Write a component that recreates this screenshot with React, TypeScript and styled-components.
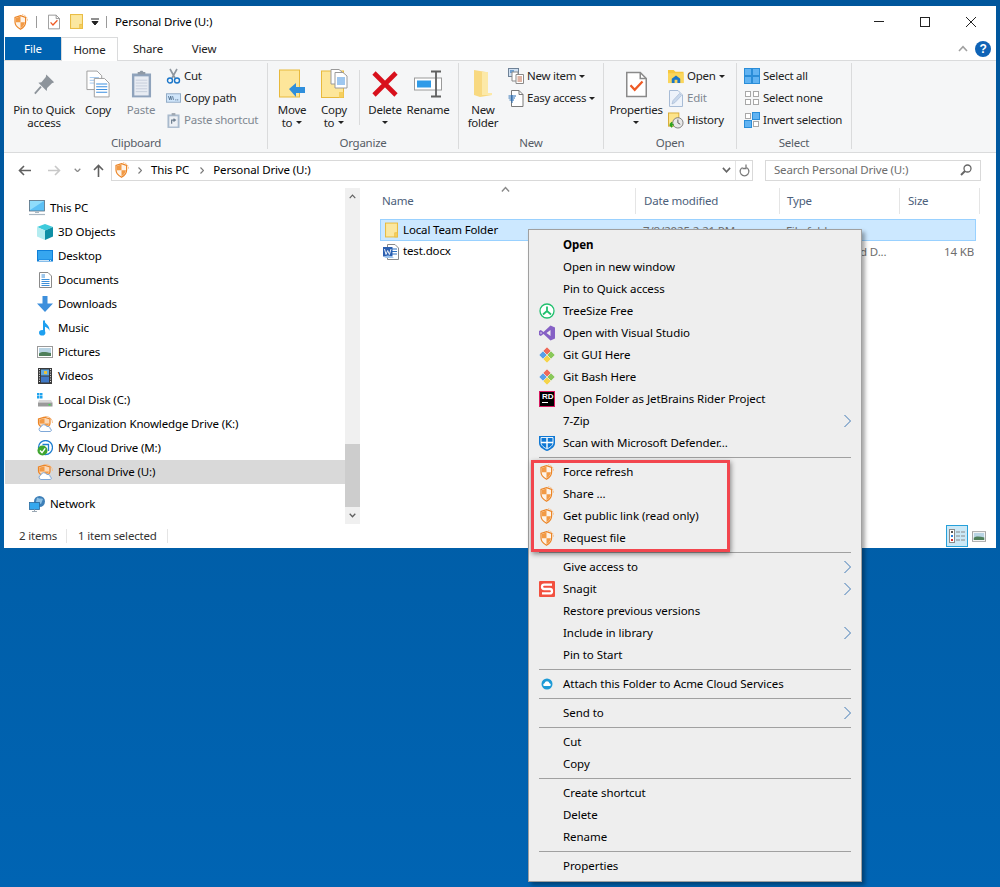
import React from "react";
import styled, { createGlobalStyle } from "styled-components";

const GlobalStyle = createGlobalStyle`
  html, body {
    margin: 0;
    padding: 0;
    background: #005a9e;
  }
  * {
    box-sizing: border-box;
  }
  body {
    font-family: "Noto Sans", "Open Sans", sans-serif;
    font-size: 11.5px;
    letter-spacing: -0.14px;
    color: #000000;
  }
`;

const Page = styled.div`
  position: relative;
  width: 1000px;
  height: 887px;
  overflow: hidden;
  padding: 6px 4px 0;
  background: linear-gradient(180deg, #00569c 0%, #005ea8 60%, #0064b3 100%);
`;
const Window = styled.div`
  width: 992px;
  height: 542px;
  display: flex;
  flex-direction: column;
  background-color: #ffffff;
`;

/* text sits a pixel above the centre of its row, as in the native shell */
const Label = styled.span`
  padding-bottom: 2px;
  white-space: nowrap;
`;

/* title bar */
const TitleBar = styled.div`
  height: 31px;
  display: flex;
  align-items: center;
  padding-left: 10px;
  flex-shrink: 0;
`;
const QuickSlot = styled.div<{ $ml: number }>`
  display: flex;
  align-items: center;
  margin-left: ${(p) => p.$ml}px;
`;
const TitleDivider = styled.div`
  width: 1px;
  height: 12px;
  background-color: #9a9a9a;
`;
const TitleText = styled.div`
  margin-left: 8px;
`;
const WindowControls = styled.div`
  display: flex;
  margin-left: auto;
  padding-right: 2px;
`;
const WindowButton = styled.div`
  width: 46px;
  height: 31px;
  display: flex;
  align-items: center;
  justify-content: center;
`;

/* tabs */
const TabRow = styled.div`
  height: 24px;
  display: flex;
  padding-left: 1px;
  border-bottom: 1px solid #dadbdc;
  flex-shrink: 0;
`;
const Tab = styled.div<{ $w: number; $active?: boolean; $file?: boolean }>`
  width: ${(p) => p.$w}px;
  height: ${(p) => (p.$active ? "24px" : "23px")};
  display: flex;
  align-items: center;
  justify-content: center;
  background-color: ${(p) => (p.$file ? "#0063b1" : "#ffffff")};
  color: ${(p) => (p.$file ? "#ffffff" : "#222222")};
  border: ${(p) => (p.$active ? "1px solid #dadbdc" : "none")};
  border-bottom: none;
`;
const TabRight = styled.div`
  margin-left: auto;
  display: flex;
  align-items: center;
  gap: 7px;
  padding-right: 5px;
`;
const HelpBadge = styled.div`
  width: 16px;
  height: 16px;
  border-radius: 50%;
  background-color: #0f63b6;
  color: #ffffff;
  font-family: "Liberation Sans", sans-serif;
  font-size: 12px;
  font-weight: 700;
  line-height: 16px;
  text-align: center;
`;

/* ribbon */
const Ribbon = styled.div`
  height: 92px;
  display: flex;
  flex-shrink: 0;
  padding: 2px 0 3px 1px;
  background-color: #f5f6f7;
  border-bottom: 1px solid #dadbdc;
  letter-spacing: -0.26px;
`;
const Group = styled.div<{ $w: number }>`
  width: ${(p) => p.$w}px;
  height: 86px;
  display: flex;
  flex-direction: column;
  border-right: 1px solid #dadbdc;
`;
const GroupBody = styled.div<{ $pl: number }>`
  flex: 1;
  display: flex;
  padding-left: ${(p) => p.$pl}px;
`;
const GroupLabel = styled.div`
  height: 12px;
  line-height: 12px;
  text-align: center;
  color: #555c66;
`;
const BigButton = styled.div<{ $w: number; $off?: boolean }>`
  width: ${(p) => p.$w}px;
  display: flex;
  flex-direction: column;
  align-items: center;
  padding-top: 5px;
  white-space: nowrap;
  color: ${(p) => (p.$off ? "#7f8791" : "#222222")};
`;
const BigIcon = styled.div`
  width: 32px;
  height: 32px;
  margin-bottom: 3px;
  display: flex;
  align-items: center;
  justify-content: center;
`;
const BigLine = styled.div`
  height: 13px;
  line-height: 13px;
  display: flex;
  align-items: center;
  gap: 4px;
`;
const Caret = styled.span`
  display: inline-block;
  width: 0;
  height: 0;
  border-left: 3px solid transparent;
  border-right: 3px solid transparent;
  border-top: 3px solid #222222;
`;
const SmallColumn = styled.div<{ $ml: number }>`
  display: flex;
  flex-direction: column;
  margin-left: ${(p) => p.$ml}px;
  padding-top: 2px;
`;
const SmallItem = styled.div<{ $off?: boolean }>`
  height: 22px;
  display: flex;
  align-items: center;
  gap: 3px;
  white-space: nowrap;
  color: ${(p) => (p.$off ? "#7f8791" : "#222222")};
`;
const SmallIcon = styled.div`
  width: 16px;
  height: 16px;
  display: flex;
  align-items: center;
  justify-content: center;
`;
const GroupDivider = styled.div`
  width: 8px;
  height: 55px;
  margin-top: 7px;
  border-right: 1px solid #dadbdc;
`;

/* address bar */
const AddressRow = styled.div`
  height: 33px;
  display: flex;
  align-items: center;
  padding: 1px 0 0 8px;
  flex-shrink: 0;
`;
const NavButton = styled.div<{ $w: number }>`
  width: ${(p) => p.$w}px;
  display: flex;
  justify-content: center;
`;
const UpButton = styled(NavButton)`
  margin: 0 2px 0 5px;
`;
const AddressBox = styled.div`
  width: 642px;
  height: 21px;
  display: flex;
  align-items: center;
  padding-left: 3px;
  border: 1px solid #d9d9d9;
`;
const CrumbArrow = styled.span`
  display: flex;
  margin: 0 9px;
`;
const CrumbGap = styled.span`
  width: 2px;
`;
const AddressEnd = styled.div`
  margin-left: auto;
  display: flex;
  align-items: center;
  height: 100%;
`;
const RefreshCell = styled.div`
  width: 17px;
  height: 100%;
  margin-left: 4px;
  display: flex;
  align-items: center;
  justify-content: center;
  border-left: 1px solid #e3e3e3;
`;
const SearchBox = styled.div`
  width: 216px;
  height: 21px;
  margin-left: 12px;
  display: flex;
  align-items: center;
  justify-content: space-between;
  padding: 0 8px;
  border: 1px solid #d9d9d9;
  color: #6d6d6d;
  letter-spacing: -0.2px;
`;

/* main area */
const Body = styled.div`
  flex: 1;
  display: flex;
  min-height: 0;
`;
const NavPane = styled.div`
  width: 356px;
  display: flex;
  flex-shrink: 0;
`;
const NavList = styled.div`
  width: 340px;
  margin-left: 1px;
  padding-top: 10px;
`;
const NavRow = styled.div<{ $child?: boolean; $selected?: boolean; $gap?: boolean }>`
  height: 24px;
  display: flex;
  align-items: center;
  gap: 5px;
  padding-left: ${(p) => (p.$child ? "32px" : "24px")};
  margin-top: ${(p) => (p.$gap ? "8px" : "0")};
  background-color: ${(p) => (p.$selected ? "#d9d9d9" : "transparent")};
  color: #000000;
  white-space: nowrap;
`;
const NavIcon = styled.div`
  width: 16px;
  height: 16px;
  display: flex;
  align-items: center;
  justify-content: center;
`;
const ScrollBar = styled.div`
  width: 15px;
  height: 336px;
  margin-top: 2px;
  display: flex;
  flex-direction: column;
  align-items: center;
  background-color: #f0f0f0;
`;
const ScrollArrow = styled.div`
  height: 17px;
  display: flex;
  align-items: center;
  justify-content: center;
`;
const ScrollThumb = styled.div`
  width: 15px;
  height: 63px;
  margin-top: auto;
  background-color: #cdcdcd;
`;
const FileArea = styled.div`
  flex: 1;
  padding-left: 20px;
`;
const HeaderRow = styled.div`
  position: relative;
  height: 33px;
  display: grid;
  grid-template-columns: 256px 144px 120px 80px;
  padding-top: 2px;
  letter-spacing: -0.2px;
`;
const HeaderCell = styled.div<{ $pl: number }>`
  height: 26px;
  display: flex;
  align-items: center;
  padding-left: ${(p) => p.$pl}px;
  border-right: 1px solid #e5e5e5;
  color: #4c607a;
`;
const SortArrow = styled.div`
  position: absolute;
  left: 121px;
  top: 0;
  display: flex;
`;
const FileRow = styled.div<{ $selected?: boolean }>`
  width: 596px;
  height: ${(p) => (p.$selected ? "22px" : "21px")};
  display: grid;
  grid-template-columns: 255px 144px 120px 75px;
  align-items: center;
  background-color: ${(p) => (p.$selected ? "#cce8ff" : "transparent")};
  outline: ${(p) => (p.$selected ? "1px solid #99d1ff" : "none")};
  outline-offset: -1px;
  white-space: nowrap;
`;
const FileName = styled.div`
  display: flex;
  align-items: center;
  gap: 3px;
  padding-left: 2px;
`;
const FileIcon = styled.div`
  width: 18px;
  height: 16px;
  display: flex;
  align-items: center;
  justify-content: center;
`;
const FileMeta = styled.div<{ $pl?: number; $right?: boolean }>`
  padding-left: ${(p) => p.$pl ?? 0}px;
  color: #6d6d6d;
  text-align: ${(p) => (p.$right ? "right" : "left")};
  overflow: hidden;
`;

/* status bar */
const StatusBar = styled.div`
  height: 24px;
  display: flex;
  align-items: center;
  padding-left: 15px;
  flex-shrink: 0;
  color: #333333;
  letter-spacing: -0.2px;
`;
const StatusItem = styled.div<{ $w: number; $pl: number }>`
  width: ${(p) => p.$w}px;
  height: 14px;
  line-height: 14px;
  padding-left: ${(p) => p.$pl}px;
  border-right: 1px solid #e5e5e5;
  white-space: nowrap;
`;
const ViewButtons = styled.div`
  margin-left: auto;
  display: flex;
  align-items: center;
  padding-right: 6px;
`;
const ViewButton = styled.div<{ $active?: boolean }>`
  width: 22px;
  height: 22px;
  display: flex;
  align-items: center;
  justify-content: center;
  border: 1px solid ${(p) => (p.$active ? "#26a0da" : "transparent")};
  background-color: ${(p) => (p.$active ? "#cbe8f6" : "transparent")};
`;

/* context menu */
const Menu = styled.div`
  position: absolute;
  left: 528px;
  top: 229px;
  width: 334px;
  padding: 4px 0;
  background-color: #eeeeee;
  border: 1px solid #a0a0a0;
  box-shadow: 3px 3px 4px rgba(0, 0, 0, 0.35);
  letter-spacing: -0.06px;
`;
const MenuItem = styled.div<{ $bold?: boolean }>`
  height: 22px;
  display: flex;
  align-items: center;
  gap: 8px;
  padding: 0 10px;
  font-weight: ${(p) => (p.$bold ? 700 : 400)};
  white-space: nowrap;
`;
const MenuIcon = styled.div`
  width: 16px;
  height: 16px;
  display: flex;
  align-items: center;
  justify-content: center;
  flex-shrink: 0;
`;
const MenuArrow = styled.div`
  margin-left: auto;
  display: flex;
`;
const MenuSeparator = styled.div`
  height: 1px;
  margin: 3px 10px;
  background-color: #a0a0a0;
`;
const Highlight = styled.div`
  position: absolute;
  left: 531px;
  top: 460px;
  width: 199px;
  height: 92px;
  border: 3px solid #f2464e;
  box-shadow: 1px 2px 5px rgba(0, 0, 0, 0.45);
`;

/* ---- icons ---- */
const Shield = () => (
  <svg width="14" height="16" viewBox="0 0 14 16">
    <path d="M8 0.6a6.2 6.2 0 0 1 5.6 6.4" fill="none" stroke="#f6bf8c" strokeWidth="1" strokeDasharray="1.6 0.8" />
    <path d="M6.5 1.6 L11.6 3.4 V8 C11.6 11.2 9.2 13.8 6.5 15.2 C3.8 13.8 1 11.2 1 8 V3.4 Z" fill="#fdf3e8" stroke="#ec8526" strokeWidth="1.2" />
    <path d="M6.5 2.6 V8.2 H1.8 V4 Z" fill="#f29a45" />
    <path d="M6.5 8.2 H10.9 C10.6 10.8 8.7 13 6.5 14.2 Z" fill="#f29a45" />
  </svg>
);
const DriveShield = () => (
  <svg width="16" height="16" viewBox="0 0 16 16">
    <path d="M8 0.5a6.5 6.5 0 0 1 7.5 6.5" fill="none" stroke="#f6bf8c" strokeWidth="1" />
    <path d="M7.5 1.2 L13 3 V7.5 C13 9.5 11 11 7.5 12 C4 11 1.5 9.5 1.5 7 V3 Z" fill="#fbd9b8" stroke="#ec8526" strokeWidth="1.2" />
    <path d="M7.5 2.2 V7.4 H2.4 V3.8 Z" fill="#f29a45" />
    <path d="M7.5 7.4 H12 C11.8 8.8 10 10 7.5 11 Z" fill="#f29a45" />
    <path d="M4 15.5 a2.2 2.2 0 0 1 -0.3-4.3 a3.3 3.3 0 0 1 6.2-0.6 a2.4 2.4 0 0 1 3.3 2.2 a1.4 1.4 0 0 1 0.2 2.7 Z" fill="#ffffff" stroke="#7fa8d8" strokeWidth="1" />
  </svg>
);
const CloudCheck = () => (
  <svg width="16" height="16" viewBox="0 0 16 16">
    <circle cx="8.5" cy="7.5" r="7" fill="#ffffff" stroke="#1f7fd0" strokeWidth="1.3" />
    <path d="M5.5 4.5 H11.5 V11" fill="none" stroke="#1f7fd0" strokeWidth="1.3" />
    <circle cx="5.5" cy="10.5" r="5" fill="#3fa52f" />
    <path d="M3 10.5 L5 12.6 L8.2 8.4" fill="none" stroke="#ffffff" strokeWidth="1.4" />
  </svg>
);
const FolderFlat = ({ w = 13, h = 16 }: { w?: number; h?: number }) => (
  <svg width={w} height={h} viewBox="0 0 14 16">
    <rect x="0.5" y="0.5" width="13" height="15" fill="#fde48a" stroke="#e8b93c" />
    <rect x="1.5" y="1.5" width="11" height="13" fill="#fbe7a0" />
    <rect x="10.5" y="11" width="3" height="4.5" fill="#f5cf5e" stroke="#e8b93c" strokeWidth="0.7" />
  </svg>
);
const CheckDoc = ({ big }: { big?: boolean }) => (
  <svg width={big ? 21 : 12} height={big ? 29 : 16} viewBox="0 0 14 17">
    <path d="M0.5 0.5 H9.5 L13.5 4.5 V16.5 H0.5 Z" fill="#ffffff" stroke="#8a8a8a" />
    <path d="M9.5 0.5 V4.5 H13.5" fill="none" stroke="#8a8a8a" />
    <path d="M3 9 L5.8 12 L11 6.5" fill="none" stroke="#ee5a24" strokeWidth="1.5" />
  </svg>
);
const Pin = () => (
  <svg width="21" height="22" viewBox="0 0 24 24">
    <path d="M14 1 L23 10 L20.5 11 L15 16.5 L14.5 20 L5 10.5 L8.5 10 L13.5 4 Z" fill="#8d949b" />
    <path d="M8 15 L1 23" stroke="#8d949b" strokeWidth="2" />
  </svg>
);
const CopyDocs = () => (
  <svg width="24" height="28" viewBox="0 0 26 30">
    <path d="M1 1 H12 L17 6 V21 H1 Z" fill="#ffffff" stroke="#9a9a9a" />
    <path d="M4 8 H14 M4 11 H14 M4 14 H14" stroke="#9cc4ee" />
    <path d="M9 9 H20 L25 14 V29 H9 Z" fill="#ffffff" stroke="#9a9a9a" />
    <path d="M11 15 H23 M11 18 H23 M11 21 H23 M11 24 H23" stroke="#3d8fe0" strokeWidth="1.2" />
  </svg>
);
const Clipboard = () => (
  <svg width="21" height="30" viewBox="0 0 22 30">
    <rect x="1" y="4" width="20" height="25" fill="#8fa3bc" />
    <rect x="3.5" y="7" width="15" height="20" fill="#e8ecf3" />
    <path d="M5 11 H17 M5 14 H17 M5 17 H17 M5 20 H17 M5 23 H17" stroke="#c5cedb" />
    <path d="M7 5 V2.5 H9 L10 1 H12 L13 2.5 H15 V5 Z" fill="#8f9aa6" />
  </svg>
);
const Scissors = () => (
  <svg width="15" height="16" viewBox="0 0 15 16">
    <path d="M4 1 L9 10 M11 1 L6 10" stroke="#8f979f" strokeWidth="1.6" />
    <circle cx="4" cy="12.5" r="2.5" fill="none" stroke="#1b76c9" strokeWidth="1.4" />
    <circle cx="11" cy="12.5" r="2.5" fill="none" stroke="#1b76c9" strokeWidth="1.4" />
  </svg>
);
const CopyPath = () => (
  <svg width="15" height="10" viewBox="0 0 16 10">
    <rect x="0.5" y="0.5" width="15" height="9" fill="#cfe5fa" stroke="#8fa9c4" />
    <path d="M2.5 3 L4 7 L5 3 L6 7 M7 3 L8 7" stroke="#3a5a7a" strokeWidth="0.8" fill="none" />
    <path d="M10 7 H14" stroke="#3a5a7a" strokeDasharray="1 1" />
  </svg>
);
const PasteShortcut = () => (
  <svg width="13" height="17" viewBox="0 0 14 17">
    <rect x="0.5" y="2" width="13" height="14.5" fill="#a9bacd" />
    <rect x="2.5" y="4" width="9" height="11" fill="#eef1f5" />
    <path d="M5 0.5 H9 V3 H5 Z" fill="#a0a8b2" />
    <path d="M5 12 V8 H9 M7 6.5 L9 8 L7 9.5" stroke="#6f7f90" strokeWidth="1.3" fill="none" />
  </svg>
);
const MoveTo = () => (
  <svg width="27" height="30" viewBox="0 0 27 30">
    <rect x="0.5" y="1" width="20" height="27" fill="#fde69a" stroke="#e8b93c" />
    <path d="M10 20 L17 14 V18 H26 V24 H17 V28 Z" fill="#2f8fdc" />
  </svg>
);
const CopyTo = () => (
  <svg width="27" height="30" viewBox="0 0 27 30">
    <rect x="0.5" y="2" width="22" height="26.5" fill="#fde69a" stroke="#e8b93c" />
    <rect x="18" y="23" width="4.5" height="5.5" fill="#f5cf5e" />
    <path d="M10 0.5 H18 L21 3 V15 H10 Z" fill="#ffffff" stroke="#9a9a9a" />
    <path d="M14 3.5 H22 L26 7 V19 H14 Z" fill="#ffffff" stroke="#9a9a9a" />
    <path d="M16 9 H24 M16 11 H24 M16 13 H24 M16 15 H24" stroke="#3d8fe0" />
  </svg>
);
const DeleteX = () => (
  <svg width="26" height="26" viewBox="0 0 26 26">
    <path d="M2 2 L24 24 M24 2 L2 24" stroke="#d8101c" strokeWidth="4.6" />
  </svg>
);
const RenameIcon = () => (
  <svg width="28" height="28" viewBox="0 0 28 28">
    <rect x="0.5" y="8" width="27" height="12" fill="#ffffff" stroke="#9a9a9a" />
    <rect x="3" y="10.5" width="14" height="7" fill="#2f9be8" />
    <path d="M17 1.5 H27 M17 26.5 H27 M22 2 V26" stroke="#5f5f5f" strokeWidth="1.8" fill="none" />
  </svg>
);
const NewFolderIcon = () => (
  <svg width="20" height="30" viewBox="0 0 20 30">
    <path d="M1 1 L13 3 V24 L19 26 L7 28 L1 26 Z" fill="#f8d981" />
    <path d="M9 3 H15 V24 H19 V26 H9 Z" fill="#fce9a8" />
  </svg>
);
const NewItem = () => (
  <svg width="16" height="16" viewBox="0 0 16 16">
    <rect x="0.5" y="0.5" width="10" height="8" fill="#cfe0f2" stroke="#6f8297" />
    <rect x="2" y="2" width="4" height="3" fill="#6f9fd0" />
    <path d="M4 4 H10 V13 H4 Z" fill="#ffffff" stroke="#8a8a8a" />
    <path d="M8 6.5 H15.5 V15.5 H8 Z" fill="#ffffff" stroke="#8a8a8a" />
    <path d="M9.5 9 H14 M9.5 11 H14 M9.5 13 H14" stroke="#c06a4a" />
  </svg>
);
const EasyAccess = () => (
  <svg width="16" height="17" viewBox="0 0 16 17">
    <path d="M3.5 0.5 H11 L15 4.5 V16.5 H3.5 Z" fill="#ffffff" stroke="#7a7a7a" />
    <path d="M11 0.5 V4.5 H15" fill="none" stroke="#7a7a7a" />
    <path d="M0.5 6 H8 M0.5 8 H7 M1.5 10 H6" stroke="#2b6fb5" strokeWidth="1" />
    <path d="M4 5 V13" stroke="#2b6fb5" />
  </svg>
);
const OpenFolder = () => (
  <svg width="17" height="15" viewBox="0 0 17 15">
    <path d="M0 0.5 H6 L8 2.5 H16.5 V14.5 H0 Z" fill="#f6c73e" />
    <path d="M0 4 H16.5 V14.5 H0 Z" fill="#fbd65c" />
    <path d="M4 14.5 V10 L8.5 6.5 L13 10 V14.5 H10 V11 H7 V14.5 Z" fill="#1b76c9" />
  </svg>
);
const EditDoc = () => (
  <svg width="14" height="17" viewBox="0 0 14 17">
    <path d="M0.5 0.5 H9 L13.5 5 V16.5 H0.5 Z" fill="#eef3fa" stroke="#a8bcd6" />
    <path d="M3 14 L4 10.5 L10.5 3.5 L12.5 5.5 L6 12.5 Z" fill="#c9d8ec" stroke="#a8bcd6" strokeWidth="0.7" />
  </svg>
);
const History = () => (
  <svg width="17" height="17" viewBox="0 0 17 17">
    <rect x="0.5" y="0.5" width="11" height="14" fill="#fde48a" stroke="#d8aa35" />
    <circle cx="10.5" cy="11" r="5.5" fill="#e8e8e8" stroke="#7a7a7a" />
    <path d="M10.5 7.5 V11 L13 12.5" stroke="#555555" fill="none" />
    <path d="M6 13 L2 13 M2 13 L4.5 10.5 M2 13 L4.5 15.5" stroke="#2da31f" strokeWidth="1.8" fill="none" />
  </svg>
);
const SelectGrid = ({ on }: { on: boolean[] }) => (
  <svg width="16" height="16" viewBox="0 0 16 16">
    {[0, 1, 2, 3].map((i) => {
      const x = i % 2 === 0 ? 0.5 : 8.5;
      const y = i < 2 ? 0.5 : 8.5;
      return on[i] ? (
        <rect key={i} x={x} y={y} width="7" height="7" fill="#61b3f2" stroke="#2a8dd8" />
      ) : (
        <rect key={i} x={x + 1} y={y + 1} width="5" height="5" fill="#ffffff" stroke="#a8a8a8" />
      );
    })}
  </svg>
);
const ArrowLeft = ({ color }: { color: string }) => (
  <svg width="13" height="11" viewBox="0 0 13 11">
    <path d="M13 5.5 H2 M6 1 L1.5 5.5 L6 10" fill="none" stroke={color} strokeWidth="1.6" />
  </svg>
);
const ArrowRight = ({ color }: { color: string }) => (
  <svg width="13" height="11" viewBox="0 0 13 11">
    <path d="M0 5.5 H11 M7 1 L11.5 5.5 L7 10" fill="none" stroke={color} strokeWidth="1.6" />
  </svg>
);
const ArrowUp = () => (
  <svg width="11" height="13" viewBox="0 0 11 13">
    <path d="M5.5 13 V2 M1 6 L5.5 1.5 L10 6" fill="none" stroke="#5f5f5f" strokeWidth="1.6" />
  </svg>
);
const ChevronDown = ({ color = "#6d6d6d", w = 7 }: { color?: string; w?: number }) => (
  <svg width={w} height={w * 0.7} viewBox="0 0 10 7">
    <path d="M1 1 L5 5.3 L9 1" fill="none" stroke={color} strokeWidth="1.8" />
  </svg>
);
const ChevronUp = ({ color = "#6d6d6d", w = 7 }: { color?: string; w?: number }) => (
  <svg width={w} height={w * 0.7} viewBox="0 0 10 7">
    <path d="M1 6 L5 1.7 L9 6" fill="none" stroke={color} strokeWidth="1.6" />
  </svg>
);
const CrumbChevron = () => (
  <svg width="4" height="7" viewBox="0 0 4 7">
    <path d="M0.5 0.5 L3.5 3.5 L0.5 6.5" fill="none" stroke="#7a7a7a" strokeWidth="1.2" />
  </svg>
);
const Refresh = () => (
  <svg width="11" height="13" viewBox="0 0 11 13">
    <path d="M3.5 3.5 A4.4 4.4 0 1 0 7.5 3.5" fill="none" stroke="#7a7a7a" strokeWidth="1.3" />
    <path d="M7 0.5 V4.5 H3.4" fill="none" stroke="#7a7a7a" strokeWidth="1.3" />
  </svg>
);
const Magnifier = () => (
  <svg width="12" height="12" viewBox="0 0 12 12">
    <circle cx="7.5" cy="4.5" r="3.5" fill="none" stroke="#666666" strokeWidth="1.3" />
    <path d="M5 7 L1 11" stroke="#666666" strokeWidth="2" />
  </svg>
);
const SubmenuArrow = () => (
  <svg width="7" height="14" viewBox="0 0 7 14">
    <path d="M0.5 1 L6.5 7 L0.5 13" fill="none" stroke="#3f78b5" strokeWidth="1" />
  </svg>
);

const Monitor = () => (
  <svg width="16" height="16" viewBox="0 0 16 16">
    <rect x="0.5" y="0.5" width="15" height="10.5" fill="#5cc0f5" stroke="#5a6f80" strokeWidth="0.8" />
    <path d="M1 1 H15 L1 10 Z" fill="#8fdcfb" />
    <path d="M6 11.5 H10 V13 H6 Z" fill="#a9b7c2" />
    <path d="M0 14.5 H16" stroke="#a9b7c2" strokeWidth="1.2" />
  </svg>
);
const Cube = () => (
  <svg width="16" height="16" viewBox="0 0 16 16">
    <path d="M8 0 L16 3 L8 6.5 L0 3 Z" fill="#3ecbdc" />
    <path d="M0 3 L8 6.5 V16 L0 12.5 Z" fill="#b4ecf0" />
    <path d="M16 3 L8 6.5 V16 L16 12.5 Z" fill="#0f8fa5" />
  </svg>
);
const DesktopIcon = () => (
  <svg width="16" height="12" viewBox="0 0 16 12">
    <rect width="16" height="11.5" fill="#0f7fd8" />
    <rect x="1" y="1" width="14" height="8.5" fill="#36a6ef" />
    <path d="M2 10.5 H12 M13 10.5 H14" stroke="#ffffff" strokeWidth="0.8" />
  </svg>
);
const DocumentsIcon = () => (
  <svg width="13" height="16" viewBox="0 0 13 16">
    <path d="M0.5 0.5 H9 L12.5 4 V15.5 H0.5 Z" fill="#ffffff" stroke="#8a8a8a" />
    <path d="M2.5 3 H6 M2.5 5 H6 M2.5 7.5 H10.5 M2.5 9.5 H10.5 M2.5 11.5 H10.5 M2.5 13.5 H10.5" stroke="#3d8fd8" />
  </svg>
);
const DownloadsIcon = () => (
  <svg width="16" height="16" viewBox="0 0 16 16">
    <path d="M5.5 0 H10.5 V7.5 H16 L8 16 L0 7.5 H5.5 Z" fill="#3d8fdc" />
  </svg>
);
const MusicIcon = () => (
  <svg width="12" height="16" viewBox="0 0 12 16">
    <path d="M5 0.5 V11" stroke="#1ea0f0" strokeWidth="2" />
    <path d="M5 0.5 C6 4 11 5 10.5 11 C10 8.5 7 7 5 6.5 Z" fill="#1ea0f0" />
    <ellipse cx="3.2" cy="12.8" rx="3.2" ry="2.8" fill="#1ea0f0" />
  </svg>
);
const PicturesIcon = ({ w = 16, h = 12 }: { w?: number; h?: number }) => (
  <svg width={w} height={h} viewBox="0 0 16 12">
    <rect x="0.5" y="0.5" width="15" height="11" fill="#ffffff" stroke="#9a9a9a" />
    <rect x="2" y="2" width="12" height="8" fill="#b9d4e4" />
    <path d="M2 7.5 C5 5 9 6 14 7 V10 H2 Z" fill="#4f7f5a" />
  </svg>
);
const VideosIcon = () => (
  <svg width="14" height="16" viewBox="0 0 14 16">
    <rect width="14" height="16" fill="#3a3a3a" />
    <rect x="3" y="1.5" width="8" height="6" fill="#5fa8e0" />
    <rect x="3" y="8.5" width="8" height="6" fill="#3f78c5" />
    <rect x="6" y="3" width="3" height="3" fill="#e8c13c" />
    <path d="M1.5 1 V15 M12.5 1 V15" stroke="#dddddd" strokeDasharray="1 1.4" />
  </svg>
);
const LocalDisk = () => (
  <svg width="16" height="14" viewBox="0 0 16 14">
    <path d="M0 0 H2.5 V2.5 H0 Z M3 0 H5.5 V2.5 H3 Z M0 3 H2.5 V5.5 H0 Z M3 3 H5.5 V5.5 H3 Z" fill="#1fa3ee" />
    <path d="M2 7 H14 L15.5 9.5 H1 Z" fill="#d8d8d8" />
    <rect x="1" y="9.5" width="14.5" height="4" fill="#9a9a9a" />
    <rect x="11.5" y="11" width="2" height="1.4" fill="#3ee04a" />
  </svg>
);
const NetworkIcon = () => (
  <svg width="16" height="16" viewBox="0 0 16 16">
    <circle cx="10.5" cy="5.5" r="5.5" fill="#3d7fb8" />
    <path d="M8 1.5 C10 3 12 2 14 3 L12 8 L7 6 Z" fill="#8cc0e4" />
    <rect x="0.5" y="6.5" width="10" height="7" fill="#35a8ee" stroke="#2a6a9e" strokeWidth="0.8" />
    <path d="M5.5 13.5 V15.5 M3 15.5 H8" stroke="#9aa8b4" />
  </svg>
);
const DocxIcon = () => (
  <svg width="16" height="16" viewBox="0 0 16 16">
    <path d="M4.5 0.5 H12 L15.5 4 V15.5 H4.5 Z" fill="#ffffff" stroke="#8a8a8a" />
    <path d="M9 5 H14 M9 7.5 H14 M9 10 H14" stroke="#2b6fc0" />
    <rect x="0" y="3" width="9.5" height="9.5" fill="#2b5fb0" />
    <path d="M1.5 5 L3 10.5 L4.7 6.5 L6.4 10.5 L8 5" fill="none" stroke="#ffffff" strokeWidth="0.9" />
    <path d="M1 13 C4 10.5 8 11 11 14 H3 Z" fill="#9cc4ee" />
  </svg>
);

const TreeSize = () => (
  <svg width="16" height="16" viewBox="0 0 16 16">
    <circle cx="8" cy="8" r="7" fill="#ffffff" stroke="#21c06e" strokeWidth="1.3" />
    <path d="M8 3.5 V8 M8 8 L4 11.5 M8 8 L12 11.5" stroke="#21c06e" strokeWidth="1.8" />
  </svg>
);
const VisualStudio = () => (
  <svg width="16" height="16" viewBox="0 0 16 16">
    <path d="M11.5 0.5 L16 2.5 V13.5 L11.5 15.5 L4.5 9 L1.8 11 L0 10 V6 L1.8 5 L4.5 7 Z" fill="#8661c5" />
    <path d="M11.5 5 L7.5 8 L11.5 11 Z M1.6 6.8 V9.2 L3 8 Z" fill="#eeeeee" />
  </svg>
);
const GitIcon = () => (
  <svg width="16" height="16" viewBox="0 0 16 16">
    <path d="M4 4 L8 0 L12 4 L8 8 Z" fill="#ef6a5a" stroke="#eeeeee" strokeWidth="0.6" />
    <path d="M8 8 L12 4 L16 8 L12 12 Z" fill="#8ac85a" stroke="#eeeeee" strokeWidth="0.6" />
    <path d="M4 12 L8 8 L12 12 L8 16 Z" fill="#f5d44a" stroke="#eeeeee" strokeWidth="0.6" />
    <path d="M0 8 L4 4 L8 8 L4 12 Z" fill="#5a9fe8" stroke="#eeeeee" strokeWidth="0.6" />
  </svg>
);
const RiderBadge = styled.div`
  width: 16px;
  height: 16px;
  display: flex;
  flex-direction: column;
  padding: 1px 2px;
  background-color: #000000;
  border: 1px solid #d6185f;
  color: #ffffff;
  font-family: "Liberation Sans", sans-serif;
  font-size: 8px;
  font-weight: 700;
  letter-spacing: 0;
  line-height: 8px;
`;
const RiderUnderline = styled.div`
  width: 6px;
  height: 1px;
  margin-top: 1px;
  background-color: #ffffff;
`;
const Defender = () => (
  <svg width="16" height="16" viewBox="0 0 16 16">
    <path d="M0 1 H16 V8 C16 12 12 14.5 8 16 C4 14.5 0 12 0 8 Z" fill="#0f78d4" />
    <path d="M8 3 V13.5 M2 7.5 H14" stroke="#ffffff" strokeWidth="1.4" />
    <path d="M2 2.5 H14 V7.5 C14 10.5 11 12.5 8 14 C5 12.5 2 10.5 2 7.5 Z" fill="none" stroke="#ffffff" strokeWidth="0.9" />
  </svg>
);
const Snagit = () => (
  <svg width="16" height="16" viewBox="0 0 16 16">
    <rect width="16" height="16" rx="1" fill="#f2503f" />
    <path d="M13 3.6 H5.2 a2.2 2.2 0 0 0 0 4.4 H10.8 a2.2 2.2 0 0 1 0 4.4 H3" fill="none" stroke="#ffffff" strokeWidth="2.3" />
  </svg>
);
const AcmeDot = () => (
  <svg width="12" height="12" viewBox="0 0 12 12">
    <circle cx="6" cy="6" r="5.5" fill="#1c9ad6" />
    <path d="M3 8 a1.5 1.5 0 0 1 0.5-2.8 a2.6 2.6 0 0 1 5 0 a1.5 1.5 0 0 1 0.5 2.8 Z" fill="#ffffff" />
  </svg>
);

type NavEntry = { label: string; icon: React.ReactNode; child?: boolean; selected?: boolean; gap?: boolean };

const NAV_ITEMS: NavEntry[] = [
  { label: "This PC", icon: <Monitor /> },
  { label: "3D Objects", icon: <Cube />, child: true },
  { label: "Desktop", icon: <DesktopIcon />, child: true },
  { label: "Documents", icon: <DocumentsIcon />, child: true },
  { label: "Downloads", icon: <DownloadsIcon />, child: true },
  { label: "Music", icon: <MusicIcon />, child: true },
  { label: "Pictures", icon: <PicturesIcon />, child: true },
  { label: "Videos", icon: <VideosIcon />, child: true },
  { label: "Local Disk (C:)", icon: <LocalDisk />, child: true },
  { label: "Organization Knowledge Drive (K:)", icon: <DriveShield />, child: true },
  { label: "My Cloud Drive (M:)", icon: <CloudCheck />, child: true },
  { label: "Personal Drive (U:)", icon: <DriveShield />, child: true, selected: true },
  { label: "Network", icon: <NetworkIcon />, gap: true },
];

type MenuEntry = { label: string; icon?: React.ReactNode; arrow?: boolean; bold?: boolean } | "sep";

const MENU_ITEMS: MenuEntry[] = [
  { label: "Open", bold: true },
  { label: "Open in new window" },
  { label: "Pin to Quick access" },
  { label: "TreeSize Free", icon: <TreeSize /> },
  { label: "Open with Visual Studio", icon: <VisualStudio /> },
  { label: "Git GUI Here", icon: <GitIcon /> },
  { label: "Git Bash Here", icon: <GitIcon /> },
  {
    label: "Open Folder as JetBrains Rider Project",
    icon: (
      <RiderBadge>
        RD
        <RiderUnderline />
      </RiderBadge>
    ),
  },
  { label: "7-Zip", arrow: true },
  { label: "Scan with Microsoft Defender...", icon: <Defender /> },
  "sep",
  { label: "Force refresh", icon: <Shield /> },
  { label: "Share ...", icon: <Shield /> },
  { label: "Get public link (read only)", icon: <Shield /> },
  { label: "Request file", icon: <Shield /> },
  "sep",
  { label: "Give access to", arrow: true },
  { label: "Snagit", icon: <Snagit />, arrow: true },
  { label: "Restore previous versions" },
  { label: "Include in library", arrow: true },
  { label: "Pin to Start" },
  "sep",
  { label: "Attach this Folder to Acme Cloud Services", icon: <AcmeDot /> },
  "sep",
  { label: "Send to", arrow: true },
  "sep",
  { label: "Cut" },
  { label: "Copy" },
  "sep",
  { label: "Create shortcut" },
  { label: "Delete" },
  { label: "Rename" },
  "sep",
  { label: "Properties" },
];

const App = () => {
  return (
    <Page>
      <GlobalStyle />
      <Window>
        <TitleBar>
          <QuickSlot $ml={0}>
            <Shield />
          </QuickSlot>
          <QuickSlot $ml={8}>
            <TitleDivider />
          </QuickSlot>
          <QuickSlot $ml={11}>
            <CheckDoc />
          </QuickSlot>
          <QuickSlot $ml={10}>
            <FolderFlat w={13} h={17} />
          </QuickSlot>
          <QuickSlot $ml={8}>
            <svg width="8" height="8" viewBox="0 0 8 8">
              <path d="M0 1 H8 M1 3.5 H7 L4 7 Z" stroke="#222222" fill="#222222" strokeWidth="1" />
            </svg>
          </QuickSlot>
          <QuickSlot $ml={7}>
            <TitleDivider />
          </QuickSlot>
          <TitleText>Personal Drive (U:)</TitleText>
          <WindowControls>
            <WindowButton>
              <svg width="10" height="1" viewBox="0 0 10 1">
                <rect width="10" height="1" fill="#222222" />
              </svg>
            </WindowButton>
            <WindowButton>
              <svg width="10" height="10" viewBox="0 0 10 10">
                <rect x="0.5" y="0.5" width="9" height="9" fill="none" stroke="#222222" />
              </svg>
            </WindowButton>
            <WindowButton>
              <svg width="10" height="10" viewBox="0 0 10 10">
                <path d="M0 0 L10 10 M10 0 L0 10" stroke="#222222" strokeWidth="1" />
              </svg>
            </WindowButton>
          </WindowControls>
        </TitleBar>

        <TabRow>
          <Tab $w={56} $file>
            File
          </Tab>
          <Tab $w={57} $active>
            Home
          </Tab>
          <Tab $w={60}>Share</Tab>
          <Tab $w={52}>View</Tab>
          <TabRight>
            <ChevronUp color="#a0a0a0" w={10} />
            <HelpBadge>?</HelpBadge>
          </TabRight>
        </TabRow>

        <Ribbon>
          <Group $w={263}>
            <GroupBody $pl={6}>
              <BigButton $w={66}>
                <BigIcon>
                  <Pin />
                </BigIcon>
                <BigLine>Pin to Quick</BigLine>
                <BigLine>access</BigLine>
              </BigButton>
              <BigButton $w={42}>
                <BigIcon>
                  <CopyDocs />
                </BigIcon>
                <BigLine>Copy</BigLine>
              </BigButton>
              <BigButton $w={44} $off>
                <BigIcon>
                  <Clipboard />
                </BigIcon>
                <BigLine>Paste</BigLine>
              </BigButton>
              <SmallColumn $ml={2}>
                <SmallItem>
                  <SmallIcon>
                    <Scissors />
                  </SmallIcon>
                  <Label>Cut</Label>
                </SmallItem>
                <SmallItem>
                  <SmallIcon>
                    <CopyPath />
                  </SmallIcon>
                  <Label>Copy path</Label>
                </SmallItem>
                <SmallItem $off>
                  <SmallIcon>
                    <PasteShortcut />
                  </SmallIcon>
                  <Label>Paste shortcut</Label>
                </SmallItem>
              </SmallColumn>
            </GroupBody>
            <GroupLabel>Clipboard</GroupLabel>
          </Group>

          <Group $w={191}>
            <GroupBody $pl={0}>
              <BigButton $w={48}>
                <BigIcon>
                  <MoveTo />
                </BigIcon>
                <BigLine>Move</BigLine>
                <BigLine>
                  to <Caret />
                </BigLine>
              </BigButton>
              <BigButton $w={36}>
                <BigIcon>
                  <CopyTo />
                </BigIcon>
                <BigLine>Copy</BigLine>
                <BigLine>
                  to <Caret />
                </BigLine>
              </BigButton>
              <GroupDivider />
              <BigButton $w={50}>
                <BigIcon>
                  <DeleteX />
                </BigIcon>
                <BigLine>Delete</BigLine>
                <BigLine>
                  <Caret />
                </BigLine>
              </BigButton>
              <BigButton $w={36}>
                <BigIcon>
                  <RenameIcon />
                </BigIcon>
                <BigLine>Rename</BigLine>
              </BigButton>
            </GroupBody>
            <GroupLabel>Organize</GroupLabel>
          </Group>

          <Group $w={145}>
            <GroupBody $pl={0}>
              <BigButton $w={48}>
                <BigIcon>
                  <NewFolderIcon />
                </BigIcon>
                <BigLine>New</BigLine>
                <BigLine>folder</BigLine>
              </BigButton>
              <SmallColumn $ml={1}>
                <SmallItem>
                  <SmallIcon>
                    <NewItem />
                  </SmallIcon>
                  <Label>New item</Label>
                  <Caret />
                </SmallItem>
                <SmallItem>
                  <SmallIcon>
                    <EasyAccess />
                  </SmallIcon>
                  <Label>Easy access</Label>
                  <Caret />
                </SmallItem>
              </SmallColumn>
            </GroupBody>
            <GroupLabel>New</GroupLabel>
          </Group>

          <Group $w={133}>
            <GroupBody $pl={6}>
              <BigButton $w={52}>
                <BigIcon>
                  <CheckDoc big />
                </BigIcon>
                <BigLine>Properties</BigLine>
                <BigLine>
                  <Caret />
                </BigLine>
              </BigButton>
              <SmallColumn $ml={6}>
                <SmallItem>
                  <SmallIcon>
                    <OpenFolder />
                  </SmallIcon>
                  <Label>Open</Label>
                  <Caret />
                </SmallItem>
                <SmallItem $off>
                  <SmallIcon>
                    <EditDoc />
                  </SmallIcon>
                  <Label>Edit</Label>
                </SmallItem>
                <SmallItem>
                  <SmallIcon>
                    <History />
                  </SmallIcon>
                  <Label>History</Label>
                </SmallItem>
              </SmallColumn>
            </GroupBody>
            <GroupLabel>Open</GroupLabel>
          </Group>

          <Group $w={115}>
            <GroupBody $pl={7}>
              <SmallColumn $ml={0}>
                <SmallItem>
                  <SmallIcon>
                    <SelectGrid on={[true, true, true, true]} />
                  </SmallIcon>
                  <Label>Select all</Label>
                </SmallItem>
                <SmallItem>
                  <SmallIcon>
                    <SelectGrid on={[false, false, false, false]} />
                  </SmallIcon>
                  <Label>Select none</Label>
                </SmallItem>
                <SmallItem>
                  <SmallIcon>
                    <SelectGrid on={[false, true, true, false]} />
                  </SmallIcon>
                  <Label>Invert selection</Label>
                </SmallItem>
              </SmallColumn>
            </GroupBody>
            <GroupLabel>Select</GroupLabel>
          </Group>
        </Ribbon>

        <AddressRow>
          <NavButton $w={24}>
            <ArrowLeft color="#5f5f5f" />
          </NavButton>
          <NavButton $w={36}>
            <ArrowRight color="#c8c8c8" />
          </NavButton>
          <NavButton $w={10}>
            <ChevronDown color="#8a8a8a" />
          </NavButton>
          <UpButton $w={22}>
            <ArrowUp />
          </UpButton>
          <AddressBox>
            <Shield />
            <CrumbArrow>
              <CrumbChevron />
            </CrumbArrow>
            <Label>This PC</Label>
            <CrumbGap />
            <CrumbArrow>
              <CrumbChevron />
            </CrumbArrow>
            <Label>Personal Drive (U:)</Label>
            <AddressEnd>
              <ChevronDown color="#666666" w={9} />
              <RefreshCell>
                <Refresh />
              </RefreshCell>
            </AddressEnd>
          </AddressBox>
          <SearchBox>
            <Label>Search Personal Drive (U:)</Label>
            <Magnifier />
          </SearchBox>
        </AddressRow>

        <Body>
          <NavPane>
            <NavList>
              {NAV_ITEMS.map((item) => (
                <NavRow key={item.label} $child={item.child} $selected={item.selected} $gap={item.gap}>
                  <NavIcon>{item.icon}</NavIcon>
                  <Label>{item.label}</Label>
                </NavRow>
              ))}
            </NavList>
            <ScrollBar>
              <ScrollArrow>
                <ChevronUp color="#606060" />
              </ScrollArrow>
              <ScrollThumb />
              <ScrollArrow>
                <ChevronDown color="#606060" />
              </ScrollArrow>
            </ScrollBar>
          </NavPane>
          <FileArea>
            <HeaderRow>
              <SortArrow>
                <ChevronUp color="#8a8a8a" w={9} />
              </SortArrow>
              <HeaderCell $pl={2}>
                <Label>Name</Label>
              </HeaderCell>
              <HeaderCell $pl={8}>
                <Label>Date modified</Label>
              </HeaderCell>
              <HeaderCell $pl={7}>
                <Label>Type</Label>
              </HeaderCell>
              <HeaderCell $pl={8}>
                <Label>Size</Label>
              </HeaderCell>
            </HeaderRow>
            <FileRow $selected>
              <FileName>
                <FileIcon>
                  <FolderFlat />
                </FileIcon>
                <Label>Local Team Folder</Label>
              </FileName>
              <FileMeta $pl={8}>
                <Label>7/8/2025 2:21 PM</Label>
              </FileMeta>
              <FileMeta $pl={7}>
                <Label>File folder</Label>
              </FileMeta>
            </FileRow>
            <FileRow>
              <FileName>
                <FileIcon>
                  <DocxIcon />
                </FileIcon>
                <Label>test.docx</Label>
              </FileName>
              <FileMeta $pl={8}>
                <Label>7/8/2025 2:21 PM</Label>
              </FileMeta>
              <FileMeta $pl={7}>
                <Label>Microsoft Word D...</Label>
              </FileMeta>
              <FileMeta $right>
                <Label>14 KB</Label>
              </FileMeta>
            </FileRow>
          </FileArea>
        </Body>

        <StatusBar>
          <StatusItem $w={48} $pl={0}>
            2 items
          </StatusItem>
          <StatusItem $w={101} $pl={11}>
            1 item selected
          </StatusItem>
          <ViewButtons>
            <ViewButton $active>
              <svg width="16" height="14" viewBox="0 0 16 14">
                <rect x="0.5" y="0.5" width="5" height="13" fill="#ffffff" stroke="#8a8a8a" />
                <rect x="2" y="2" width="2" height="2" fill="#555555" />
                <rect x="2" y="6" width="2" height="2" fill="#2b7fd8" />
                <rect x="2" y="10" width="2" height="2" fill="#d82b2b" />
                <path d="M7 3 H16 M7 7 H16 M7 11 H16" stroke="#8a8a8a" strokeDasharray="4 1" />
              </svg>
            </ViewButton>
            <ViewButton>
              <PicturesIcon w={14} h={11} />
            </ViewButton>
          </ViewButtons>
        </StatusBar>
      </Window>

      <Menu>
        {MENU_ITEMS.map((item, idx) =>
          item === "sep" ? (
            <MenuSeparator key={idx} />
          ) : (
            <MenuItem key={idx} $bold={item.bold}>
              <MenuIcon>{item.icon}</MenuIcon>
              <Label>{item.label}</Label>
              {item.arrow && (
                <MenuArrow>
                  <SubmenuArrow />
                </MenuArrow>
              )}
            </MenuItem>
          ),
        )}
      </Menu>
      <Highlight />
    </Page>
  );
};

export default App;
